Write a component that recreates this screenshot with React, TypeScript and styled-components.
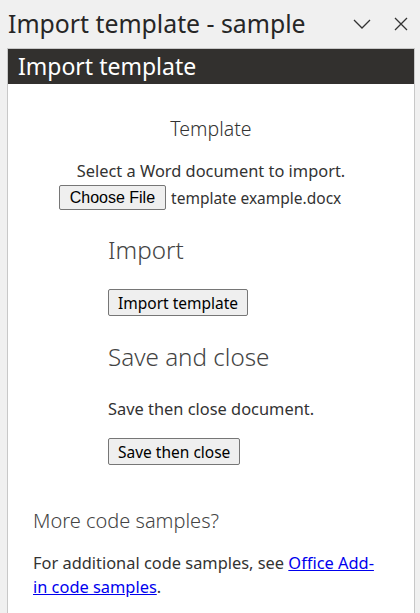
import React from 'react';
import styled, { createGlobalStyle } from 'styled-components';

const GlobalStyle = createGlobalStyle`
    html, body {
        margin: 0;
        padding: 0;
        background: #f0f0f0;
        height: 613px;
        overflow: hidden;
    }
    body {
        font-family: "Noto Sans", "Open Sans", sans-serif;
        color: #333333;
    }
`;

const TitleBar = styled.div`
    display: flex;
    align-items: center;
    height: 48px;
    padding: 0 8px 0 8px;
`;

const TitleText = styled.div`
    flex: 1;
    font-size: 24.8px;
    font-weight: 400;
    color: #262626;
    margin-top: -2px;
`;

const TitleIcons = styled.div`
    display: flex;
    align-items: center;
    gap: 23px;
    margin-right: 4px;
`;

const Panel = styled.div`
    margin: 0 5px 0 7px;
    border: 1px solid #c8c8c8;
    border-bottom: none;
    background: #ffffff;
    height: 565px;
`;

const PanelHeader = styled.div`
    background: #32302e;
    color: #ffffff;
    font-size: 23px;
    height: 35px;
    line-height: 34px;
    padding-left: 10px;
`;

const CenterBlock = styled.section`
    display: flex;
    flex-direction: column;
    align-items: center;
    padding-top: 31px;
`;

const SmallHeading = styled.div`
    font-size: 19.5px;
    font-weight: 300;
    margin-bottom: 18px;
`;

const Text = styled.div`
    font-size: 16.4px;
    line-height: 22px;
`;

const FileRow = styled.div`
    display: flex;
    align-items: center;
    gap: 5px;
    font-size: 15.5px;
    margin-top: 3px;
    padding-right: 22px;
`;

const NativeButton = styled.button`
    font-family: "Liberation Sans", Arial, sans-serif;
    font-size: 16px;
    color: #000000;
    background: #efefef;
    border: 1px solid #767676;
    border-radius: 2px;
    padding: 1px 10px;
    height: 25px;
`;

const SegoeButton = styled(NativeButton)`
    font-family: "Noto Sans", "Open Sans", sans-serif;
    font-size: 15.5px;
    height: 27px;
    padding: 0 9px;
`;

const Sections = styled.div`
    padding: 23px 0 0 100px;
`;

const SectionHeading = styled.div`
    font-size: 24.2px;
    font-weight: 300;
    color: #444444;
    margin-bottom: 23px;
`;

const Section = styled.div<{ gap?: number }>`
    display: flex;
    flex-direction: column;
    align-items: flex-start;
    margin-bottom: ${(p) => p.gap ?? 24}px;
`;

const SectionText = styled(Text)`
    margin: 2px 0 18px;
`;

const Footer = styled.div`
    padding: 10px 31px 0 25px;
`;

const FooterHeading = styled.div`
    font-size: 20px;
    font-weight: 300;
    color: #444444;
    margin-bottom: 17px;
`;

const FooterText = styled.div`
    font-size: 16.4px;
    line-height: 24px;
`;

const Link = styled.a`
    color: #0000ee;
    text-decoration: underline;
`;

const ChevronIcon = () => (
    <svg width="18" height="10" viewBox="0 0 18 10">
        <path d="M1 1 L9 9 L17 1" fill="none" stroke="#333" strokeWidth="1.3" />
    </svg>
);

const CloseIcon = () => (
    <svg width="14" height="14" viewBox="0 0 14 14">
        <path d="M1 1 L13 13 M13 1 L1 13" fill="none" stroke="#333" strokeWidth="1.3" />
    </svg>
);

const App: React.FC = () => {
    return (
        <>
            <GlobalStyle />
            <TitleBar>
                <TitleText>Import template - sample</TitleText>
                <TitleIcons>
                    <ChevronIcon />
                    <CloseIcon />
                </TitleIcons>
            </TitleBar>
            <Panel>
                <PanelHeader>Import template</PanelHeader>
                <CenterBlock>
                    <SmallHeading>Template</SmallHeading>
                    <Text>Select a Word document to import.</Text>
                    <FileRow>
                        <NativeButton>Choose File</NativeButton>
                        <span>template example.docx</span>
                    </FileRow>
                </CenterBlock>
                <Sections>
                    <Section>
                        <SectionHeading>Import</SectionHeading>
                        <SegoeButton>Import template</SegoeButton>
                    </Section>
                    <Section gap={32}>
                        <SectionHeading>Save and close</SectionHeading>
                        <SectionText>Save then close document.</SectionText>
                        <SegoeButton>Save then close</SegoeButton>
                    </Section>
                </Sections>
                <Footer>
                    <FooterHeading>More code samples?</FooterHeading>
                    <FooterText>
                        For additional code samples, see <Link href="#">Office Add-in code samples</Link>.
                    </FooterText>
                </Footer>
            </Panel>
        </>
    );
};

export default App;
